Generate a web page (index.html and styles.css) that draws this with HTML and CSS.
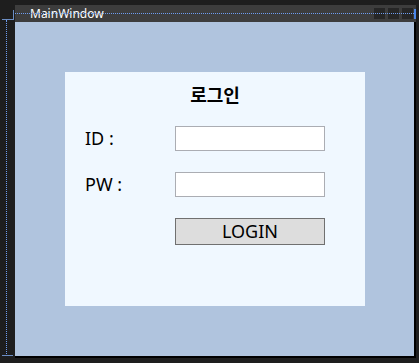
FILE: index.html
```html
<!DOCTYPE html>
<html lang="ko">
<head>
  <meta charset="UTF-8" />
  <title>MainWindow</title>
  <meta name="viewport" content="width=device-width, initial-scale=1.0" />
  <link rel="stylesheet" href="styles.css">
</head>
<body>

  <div class="window">
    <div class="titlebar">
      <span class="caption">MainWindow</span>
      <div class="caption-buttons">
        <span class="cbtn"></span>
        <span class="cbtn"></span>
        <span class="cbtn"></span>
      </div>
    </div>

    <div class="client">
      <div class="panel">
        <h2 class="panel-title">로그인</h2>
        <div class="form">
          <label class="label" for="userId">ID :</label>
          <input type="text" id="userId" class="field" />
          <label class="label" for="userPw">PW :</label>
          <input type="password" id="userPw" class="field" />
          <span></span>
          <button class="login-btn">LOGIN</button>
        </div>
      </div>
    </div>
  </div>

  <!-- designer guides -->
  <div class="guide guide-top"></div>
  <div class="guide guide-left"></div>
  <div class="corner corner-top"></div>
  <div class="corner corner-bottom"></div>
  <div class="guide-handle"></div>

</body>
</html>
```

FILE: styles.css
```css
:root {
  --chrome: #1e1e1e;
  --titlebar: #3d3d3d;
  --client-bg: #b0c4de;
  --panel-bg: #f0f8ff;
  --guide: #6d9cf0;
  --corner: #6c8ec4;
  --font: "Noto Sans", "Noto Sans CJK KR", sans-serif;
}
body {
  margin: 0;
  background: var(--chrome);
  font-family: var(--font);
  width: 419px;
  height: 363px;
  overflow: hidden;
}
.window {
  margin: 5px 0 0 15px;
  width: 401px;
}
.titlebar {
  height: 17px;
  background: var(--titlebar);
  display: flex;
  padding-left: 15px;
}
.caption {
  color: #fff;
  font-size: 12px;
  line-height: 17px;
}
.caption-buttons {
  margin-left: auto;
  display: flex;
  gap: 3px;
  padding: 3px 3px 0 0;
}
.cbtn {
  width: 11px;
  height: 11px;
  background: #262626;
}
.client {
  width: 401px;
  height: 336px;
  box-sizing: border-box;
  background: var(--client-bg);
  border-right: 2px solid #000;
  border-bottom: 2px solid #000;
  padding: 50px 0 0 50px;
}
.panel {
  width: 300px;
  height: 234px;
  background: var(--panel-bg);
  box-sizing: border-box;
  padding: 10px 0 0 20px;
}
.panel-title {
  margin: 0 0 20px -20px;
  height: 24px;
  line-height: 24px;
  text-align: center;
  font-size: 18px;
  font-weight: bold;
  color: #000;
  font-family: "Noto Sans CJK KR", sans-serif;
}
.form {
  display: grid;
  grid-template-columns: 90px 150px;
  grid-template-rows: 25px 25px 27px;
  row-gap: 21px;
  align-items: center;
}
.label {
  font-size: 18px;
  color: #000;
  line-height: 25px;
}
.field {
  width: 150px;
  height: 25px;
  box-sizing: border-box;
  border: 1px solid #abadb3;
  background: #fff;
  margin: 0;
  padding: 0 3px;
  font-family: var(--font);
}
.login-btn {
  width: 150px;
  height: 27px;
  box-sizing: border-box;
  border: 1px solid #707070;
  background: #dddddd;
  margin: 0;
  padding: 0;
  font-family: var(--font);
  font-size: 18px;
  line-height: 25px;
  color: #000;
}
.guide {
  position: absolute;
  width: 0;
  height: 0;
}
.guide-top {
  left: 13px;
  top: 13px;
  width: 401px;
  border-top: 1px dotted var(--guide);
}
.guide-left {
  left: 6px;
  top: 20px;
  height: 334px;
  border-left: 1px dotted var(--guide);
}
.corner {
  position: absolute;
  left: 2px;
  width: 11px;
}
.corner-top {
  top: 10px;
  height: 9px;
  border-right: 1px solid var(--corner);
  border-bottom: 1px solid var(--corner);
}
.corner-bottom {
  top: 355px;
  border-top: 1px solid var(--corner);
}
.guide-handle {
  position: absolute;
  left: 414px;
  top: 9px;
  width: 2px;
  height: 10px;
  background: #4a86e8;
}
```
